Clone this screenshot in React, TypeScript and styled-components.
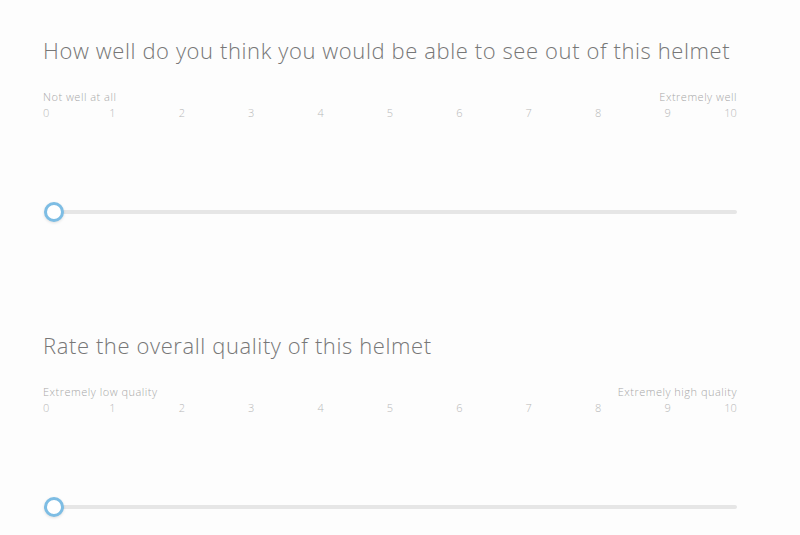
import React from 'react'
import styled, { createGlobalStyle } from 'styled-components'

const GlobalStyle = createGlobalStyle`
  html, body {
    margin: 0;
    padding: 0;
    background: #fdfdfd;
  }
  body {
    font-family: 'Open Sans', 'Liberation Sans', sans-serif;
    font-weight: 300;
  }
`

const Page = styled.div`
  width: 800px;
  height: 535px;
  overflow: hidden;
  padding: 35px 0 0 43px;
  box-sizing: border-box;
`

const Question = styled.section`
  width: 694px;
  margin-bottom: 106px;
`

const Title = styled.h2`
  margin: 0;
  font-size: 22px;
  line-height: 30px;
  font-weight: 300;
  letter-spacing: 0.6px;
  color: #777;
  white-space: nowrap;
`

const Anchors = styled.div`
  display: flex;
  justify-content: space-between;
  margin-top: 24px;
  font-size: 11px;
  line-height: 16px;
  letter-spacing: 0.5px;
  color: #a8a8a8;
`

const Scale = styled.div`
  display: flex;
  justify-content: space-between;
  font-size: 11px;
  line-height: 16px;
  color: #b8b8b8;
`

const Tick = styled.span<{ $edge?: 'start' | 'end' }>`
  width: 0;
  display: flex;
  white-space: nowrap;
  justify-content: ${(p) => (p.$edge === 'start' ? 'flex-start' : p.$edge === 'end' ? 'flex-end' : 'center')};
`

const Range = styled.input.attrs({ type: 'range' })`
  -webkit-appearance: none;
  appearance: none;
  display: block;
  width: 693px;
  height: 24px;
  margin: 79px 0 0 1px;
  padding: 0;
  background: transparent;
  outline: none;

  &::-webkit-slider-runnable-track {
    height: 4px;
    border-radius: 2px;
    background: #e6e6e6;
  }

  &::-webkit-slider-thumb {
    -webkit-appearance: none;
    appearance: none;
    width: 20px;
    height: 20px;
    margin-top: -8px;
    border-radius: 50%;
    box-sizing: border-box;
    border: 3px solid #7dbde4;
    background: #fff;
    box-shadow: 0 1px 3px rgba(0, 0, 0, 0.12);
  }
`

type Item = { title: string; low: string; high: string }

const items: Item[] = [
  { title: 'How well do you think you would be able to see out of this helmet', low: 'Not well at all', high: 'Extremely well' },
  { title: 'Rate the overall quality of this helmet', low: 'Extremely low quality', high: 'Extremely high quality' },
]

function RatingQuestion({ item }: { item: Item }) {
  const nums = Array.from({ length: 11 }, (_, i) => i)
  return (
    <Question>
      <Title>{item.title}</Title>
      <Anchors>
        <span>{item.low}</span>
        <span>{item.high}</span>
      </Anchors>
      <Scale>
        {nums.map((n) => (
          <Tick key={n} $edge={n === 0 ? 'start' : n === 10 ? 'end' : undefined}>
            {n}
          </Tick>
        ))}
      </Scale>
      <Range min={0} max={10} step={1} defaultValue={0} />
    </Question>
  )
}

export default function App() {
  return (
    <>
      <GlobalStyle />
      <Page>
        {items.map((item) => (
          <RatingQuestion key={item.title} item={item} />
        ))}
      </Page>
    </>
  )
}
